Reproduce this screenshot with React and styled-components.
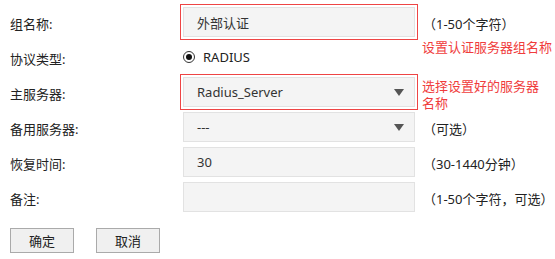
import styled, { createGlobalStyle } from "styled-components";

const GlobalStyle = createGlobalStyle`
    body {
        margin: 0;
        background: #ffffff;
        font-family: "Noto Sans", "Noto Sans CJK SC", sans-serif;
        font-size: 13px;
        color: #222222;
    }
`

export default function App() {
    return (
        <Page>
            <GlobalStyle />
            <Row>
                <Label>组名称:</Label>
                <Box highlighted>外部认证</Box>
                <Hint>（1-50个字符）</Hint>
                <Note top={32}>设置认证服务器组名称</Note>
            </Row>
            <Row>
                <Label>协议类型:</Label>
                <RadioWrap>
                    <Radio><Dot /></Radio>
                    RADIUS
                </RadioWrap>
            </Row>
            <Row>
                <Label>主服务器:</Label>
                <Box highlighted>
                    Radius_Server
                    <Arrow />
                </Box>
                <Note top={1}>选择设置好的服务器<br />名称</Note>
            </Row>
            <Row>
                <Label>备用服务器:</Label>
                <Box>
                    ---
                    <Arrow />
                </Box>
                <Hint>（可选）</Hint>
            </Row>
            <Row>
                <Label>恢复时间:</Label>
                <Box>30</Box>
                <Hint>（30-1440分钟）</Hint>
            </Row>
            <Row>
                <Label>备注:</Label>
                <Box />
                <Hint>（1-50个字符，可选）</Hint>
            </Row>
            <Buttons>
                <Button>确定</Button>
                <Button>取消</Button>
            </Buttons>
        </Page>
    )
}

const Page = styled.div`
    width: 555px;
    height: 259px;
    padding: 7px 0 0 10px;
    box-sizing: border-box;
    display: flex;
    flex-direction: column;
    gap: 5px;
`
const Row = styled.div`
    position: relative;
    display: flex;
    align-items: center;
    height: 30px;
`
const Label = styled.div`
    width: 173px;
    flex-shrink: 0;
    padding-top: 3px;
`
const Box = styled.div`
    width: 232px;
    height: 30px;
    box-sizing: border-box;
    flex-shrink: 0;
    display: flex;
    align-items: center;
    justify-content: space-between;
    padding: 0 10px 0 13px;
    background: #f4f4f4;
    border: 1px solid #e2e2e2;
    color: #333333;
    outline: ${p => p.highlighted ? "1px solid #ee4444" : "none"};
    outline-offset: 2px;
`
const Arrow = styled.span`
    width: 0;
    height: 0;
    border-left: 5px solid transparent;
    border-right: 5px solid transparent;
    border-top: 7px solid #555555;
`
const Hint = styled.div`
    margin-left: 8px;
    padding-top: 3px;
    color: #222222;
    white-space: nowrap;
`
const Note = styled.div`
    position: absolute;
    left: 412px;
    top: ${p => p.top}px;
    width: 140px;
    line-height: 17px;
    color: #f03c3c;
    white-space: nowrap;
`
const RadioWrap = styled.div`
    display: flex;
    align-items: center;
    gap: 8px;
    color: #222222;
`
const Radio = styled.span`
    width: 12px;
    height: 12px;
    box-sizing: border-box;
    border: 1px solid #333333;
    border-radius: 50%;
    display: flex;
    align-items: center;
    justify-content: center;
`
const Dot = styled.span`
    width: 6px;
    height: 6px;
    border-radius: 50%;
    background: #111111;
`
const Buttons = styled.div`
    display: flex;
    gap: 22px;
    margin-top: 11px;
`
const Button = styled.button`
    width: 64px;
    height: 25px;
    background: #f0f0f0;
    border: 1px solid #aaaaaa;
    font-family: "Noto Sans CJK SC", sans-serif;
    font-size: 13px;
    color: #222222;
    padding: 0;
`
